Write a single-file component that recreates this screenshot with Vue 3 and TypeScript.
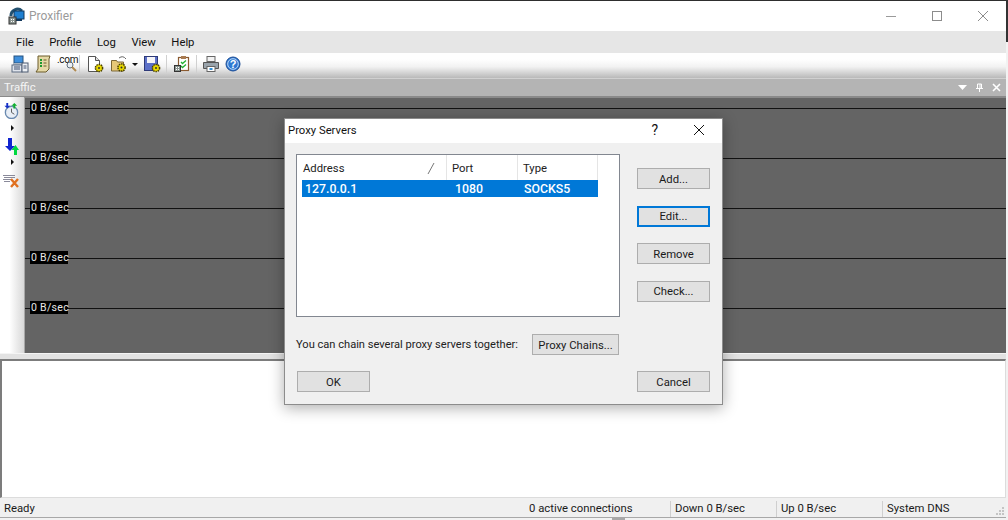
<script setup lang="ts">
const menus: string[] = ['File', 'Profile', 'Log', 'View', 'Help']
const rates: number[] = [0, 1, 2, 3, 4]
</script>

<template>
  <div class="screen">
    <div class="topedge"></div>
    <i class="desk"></i>
    <i class="deskbottom"></i>
    <div class="window">
      <div class="titlebar">
        <svg class="appicon" width="18" height="18" viewBox="0 0 18 18">
          <path d="M3 9a6.500 6.500 0 0 1 11-5" fill="none" stroke="#23506f" stroke-width="3" />
          <rect x="6" y="4" width="10" height="8" fill="#1f7fd0" stroke="#12385c" />
          <rect x="8" y="12" width="6" height="2" fill="#12385c" />
          <rect x="1" y="10" width="7" height="7" fill="#8a9490" stroke="#333" />
          <rect x="3" y="12" width="1" height="1" fill="#fff" /><rect x="5" y="12" width="1" height="1" fill="#fff" />
          <rect x="3" y="14" width="1" height="1" fill="#fff" /><rect x="5" y="14" width="1" height="1" fill="#fff" />
        </svg>
        <span class="apptitle">Proxifier</span>
        <div class="winctl">
          <svg width="12" height="12" viewBox="0 0 12 12"><path d="M1 6.500h10" stroke="#9a9a9a" /></svg>
          <svg width="12" height="12" viewBox="0 0 12 12"><rect x="1.500" y="1.500" width="9" height="9" fill="none" stroke="#8c8c8c" /></svg>
          <svg width="12" height="12" viewBox="0 0 12 12"><path d="M1 1l10 10M11 1L1 11" stroke="#8c8c8c" /></svg>
        </div>
      </div>

      <div class="menubar">
        <span v-for="m in menus" :key="m" class="menu">{{ m }}</span>
      </div>

      <div class="toolbar">
        <svg class="ti" width="18" height="18" viewBox="0 0 18 18">
          <rect x="3" y="1" width="9" height="7" fill="#3f8fdc" stroke="#27527f" />
          <rect x="2" y="8" width="10" height="2" fill="#aab4c2" />
          <rect x="1" y="10" width="10" height="7" fill="#dfe4ec" stroke="#5c6b80" />
          <rect x="11" y="8" width="6" height="9" fill="#eef1f5" stroke="#4c5a70" />
          <path d="M3 12h6M3 14h6M12.500 11h3M12.500 13h3" stroke="#405070" />
        </svg>
        <svg class="ti" width="18" height="18" viewBox="0 0 18 18">
          <path d="M4 1h12l-1 3v10l-3 3H2l2-3z" fill="#e5d9a6" stroke="#6a5a2a" />
          <path d="M6 5h2M6 8h2M6 11h2" stroke="#1c9a2f" stroke-width="2" />
          <path d="M9.500 5h3M9.500 8h3M9.500 11h3" stroke="#6a5a2a" />
        </svg>
        <span class="ti dotcom">
          <span class="dottext">.com</span>
          <svg class="lens" width="11" height="11" viewBox="0 0 11 11">
            <circle cx="4" cy="4" r="3" fill="#dfeaf4" fill-opacity="0.5" stroke="#5a6a7a" />
            <path d="M6 6l4 4" stroke="#b08a50" stroke-width="2" />
          </svg>
        </span>
        <i class="sep"></i>
        <svg class="ti doc" width="20" height="18" viewBox="0 0 20 18">
          <path d="M2.500 1.500h7l4 4v11h-11z" fill="#fff" stroke="#555" />
          <path d="M9.500 1.500v4h4" fill="#ddd" stroke="#555" />
          <circle cx="13" cy="13" r="3.600" fill="#e8d800" stroke="#4a4000" stroke-width="1.500" stroke-dasharray="1.500 0.800" />
          <circle cx="13" cy="13" r="1" fill="#333" />
        </svg>
        <svg class="ti" width="19" height="18" viewBox="0 0 19 18">
          <path d="M1.500 5.500h5l1 1.500h6v9h-12z" fill="#e6c878" stroke="#7a6636" />
          <path d="M9 3q4-3 7 1" fill="none" stroke="#666" />
          <circle cx="11.500" cy="12.500" r="3.600" fill="#e8d800" stroke="#4a4000" stroke-width="1.500" stroke-dasharray="1.500 0.800" />
          <circle cx="11.500" cy="12.500" r="1" fill="#333" />
        </svg>
        <i class="caret"></i>
        <svg class="ti save" width="20" height="18" viewBox="0 0 20 18">
          <rect x="1.500" y="1.500" width="13" height="14" fill="#5c70c8" stroke="#2e3a78" />
          <rect x="4" y="2" width="8" height="6" fill="#f4f4f8" />
          <circle cx="13" cy="13" r="3.600" fill="#e8d800" stroke="#4a4000" stroke-width="1.500" stroke-dasharray="1.500 0.800" />
          <circle cx="13" cy="13" r="1" fill="#333" />
        </svg>
        <i class="sep"></i>
        <svg class="ti" width="18" height="18" viewBox="0 0 18 18">
          <rect x="5.500" y="2.500" width="10" height="13" fill="#fff" stroke="#8a5a30" stroke-width="1.200" />
          <rect x="8" y="1" width="5" height="3" fill="#a87a50" />
          <path d="M8 7l1.500 1.500L13 5.500M8 11l1.500 1.500L13 9.500" fill="none" stroke="#22b030" stroke-width="1.300" />
          <rect x="1.500" y="10.500" width="6" height="6" fill="#8a9490" stroke="#333" />
          <rect x="3" y="12" width="1" height="1" fill="#fff" /><rect x="5" y="12" width="1" height="1" fill="#fff" />
          <rect x="3" y="14" width="1" height="1" fill="#fff" /><rect x="5" y="14" width="1" height="1" fill="#fff" />
        </svg>
        <i class="sep third"></i>
        <svg class="ti" width="18" height="18" viewBox="0 0 18 18">
          <rect x="5" y="1.500" width="8" height="5" fill="#f2f2f2" stroke="#666" />
          <path d="M1.500 7.500h15v6h-15z" fill="#9aa4ac" stroke="#555" />
          <rect x="5" y="11.500" width="8" height="5" fill="#fff" stroke="#666" />
          <rect x="7.500" y="13" width="3" height="2" fill="#2f8fd8" />
        </svg>
        <svg class="ti" width="16" height="16" viewBox="0 0 16 16">
          <circle cx="8" cy="8" r="7" fill="#2e78d2" stroke="#1c4c94" />
          <circle cx="8" cy="8" r="5.300" fill="none" stroke="#bcd8f6" />
          <text x="8" y="12" class="qmark" text-anchor="middle">?</text>
        </svg>
      </div>

      <div class="panelhead">
        <span class="paneltitle">Traffic</span>
        <div class="panelctl">
          <svg width="9" height="5" viewBox="0 0 9 5"><path d="M0 0h9L4.500 5z" fill="#fff" /></svg>
          <svg width="9" height="9" viewBox="0 0 9 9"><path d="M2.500 1h4v4.500h-4zM1 5.500h7M4.500 5.500V9M5 1v4" fill="none" stroke="#fff" /></svg>
          <svg width="9" height="9" viewBox="0 0 9 9"><path d="M1 1l7 7M8 1L1 8" stroke="#fff" stroke-width="1.600" /></svg>
        </div>
      </div>

      <div class="traffic">
        <div class="strip">
          <svg class="si" width="17" height="17" viewBox="0 0 18 18">
            <circle cx="9" cy="11" r="6.500" fill="#e8eef6" stroke="#6a8ab0" stroke-width="1.400" />
            <path d="M9 7v4l3 2" fill="none" stroke="#555" />
            <path d="M3.500 1v3H1.500l3 3 3-3H5.500V1z" fill="#1530c8" />
            <path d="M11 7V4H9l3-3 3 3h-2v3z" fill="#10b030" />
          </svg>
          <i class="tri"></i>
          <svg class="si gap" width="14" height="17" viewBox="0 0 14 17">
            <path d="M3 0h4v8h3L5 13 0 8h3z" fill="#1024d0" />
            <path d="M9 17v-5H6.500L10.500 7l3.500 5h-2v5z" fill="#00d840" />
          </svg>
          <i class="tri second"></i>
          <svg class="si gap2" width="17" height="14" viewBox="0 0 17 14">
            <path d="M0 1.500h12M1 3.500h11M0 5.500h8M1 7.500h6" stroke="#8a8a9a" />
            <path d="M8 5l7 8M15 5l-7 8" stroke="#e07020" stroke-width="2.400" />
          </svg>
        </div>
        <div class="graph">
          <div v-for="r in rates" :key="r" class="row">
            <i class="tick"></i>
            <span class="rate">0 B/sec</span>
            <i class="line"></i>
          </div>
        </div>
      </div>

      <div class="splitter"></div>
      <div class="logbox"></div>

      <div class="statusbar">
        <span class="st ready">Ready</span>
        <span class="st conn">0 active connections</span>
        <span class="st down">Down 0 B/sec</span>
        <span class="st up">Up 0 B/sec</span>
        <span class="st dns">System DNS</span>
        <svg class="grip" width="10" height="10" viewBox="0 0 10 10">
          <path d="M7 1h2v2H7zM4 4h2v2H4zM7 4h2v2H7zM1 7h2v2H1zM4 7h2v2H4zM7 7h2v2H7z" fill="#c4c4c4" />
        </svg>
      </div>
    </div>

    <div class="dialog">
      <div class="dtitle">
        <span>Proxy Servers</span>
        <span class="help">?</span>
        <svg class="dclose" width="12" height="12" viewBox="0 0 12 12"><path d="M1 1l10 10M11 1L1 11" stroke="#111" /></svg>
      </div>
      <div class="dbody">
        <div class="main">
          <div class="listbox">
            <div class="lhead">
              <span class="hc c1">Address<svg class="sort" width="8" height="13" viewBox="0 0 8 13"><path d="M1 12L7 1" stroke="#777" /></svg></span>
              <span class="hc c2">Port</span>
              <span class="hc c3">Type</span>
            </div>
            <div class="lrow">
              <span class="rc r1">127.0.0.1</span>
              <span class="rc r2">1080</span>
              <span class="rc r3">SOCKS5</span>
            </div>
          </div>
          <div class="side">
            <button class="btn">Add...</button>
            <button class="btn focus">Edit...</button>
            <button class="btn">Remove</button>
            <button class="btn">Check...</button>
          </div>
        </div>
        <div class="chain">
          <span class="chaintext">You can chain several proxy servers together:</span>
          <button class="btn chains">Proxy Chains...</button>
        </div>
        <div class="actions">
          <button class="btn">OK</button>
          <button class="btn">Cancel</button>
        </div>
      </div>
    </div>
  </div>
</template>

<style>
html, body { margin: 0; background: #fff; }
</style>

<style scoped>
.screen {
  position: relative;
  width: 1008px;
  height: 520px;
  overflow: hidden;
  background: #f2f2f2;
  font-family: Roboto, "Noto Sans", sans-serif;
  font-size: 11.300px;
  color: #1a1a1a;
}
.topedge { height: 1px; background: #2e2e2e; }
.desk {
  position: absolute;
  right: 0;
  top: 0;
  width: 2px;
  height: 42px;
  background: #333;
}
.deskbottom {
  position: absolute;
  left: 612px;
  bottom: 0;
  width: 13px;
  height: 2px;
  background: #a8a8a8;
}
.window {
  width: 1006px;
  display: flex;
  flex-direction: column;
}
.titlebar {
  height: 30px;
  flex: none;
  background: #fff;
  display: flex;
  align-items: center;
  padding-left: 8px;
  box-sizing: border-box;
}
.appicon { margin-right: 3px; margin-top: -1px; }
.apptitle { color: #9a9a9a; font-size: 12px; }
.winctl {
  margin-left: auto;
  display: flex;
  gap: 34px;
  padding-right: 17px;
  margin-top: -1px;
}
.menubar {
  height: 22px;
  flex: none;
  background: #e6e6e6;
  display: flex;
  align-items: center;
  padding-left: 16px;
  gap: 15.500px;
  color: #111;
}
.toolbar {
  height: 25px;
  flex: none;
  box-sizing: border-box;
  padding-bottom: 3px;
  background: linear-gradient(#fff 25%, #f2f2f2 55%, #b9b9b9);
  display: flex;
  align-items: center;
  padding-left: 11px;
}
.ti { flex: none; margin-right: 5px; }
.dotcom {
  position: relative;
  width: 18px;
  height: 18px;
  margin-right: 4px;
}
.dottext {
  position: absolute;
  left: 0;
  top: -1px;
  font-size: 10px;
  letter-spacing: -0.300px;
  color: #111;
}
.lens { position: absolute; left: 9px; top: 6px; }
.sep { width: 1px; height: 18px; background: #d0d0d0; margin: 0 6px 0 0; flex: none; }
.sep.third { margin-right: 5px; }
.doc { margin-right: 4px; }
.caret {
  width: 0;
  height: 0;
  border: 3px solid transparent;
  border-top: 3px solid #111;
  border-bottom: 0;
  margin: 0 5px 0 -2px;
  flex: none;
}
.save { margin-right: 3px; }
.panelhead {
  height: 19px;
  flex: none;
  background: #b4b4b4;
  border-top: 1px solid #d0d0d0;
  border-bottom: 1px solid #8a8a8a;
  box-sizing: border-box;
  display: flex;
  align-items: center;
  padding-left: 4px;
  color: #f4f4f4;
}
.panelctl {
  margin-left: auto;
  display: flex;
  align-items: center;
  gap: 8px;
  padding-right: 5px;
}
.traffic { height: 256px; flex: none; display: flex; }
.strip {
  width: 24px;
  background: linear-gradient(90deg, #fff 40%, #d8d8d8);
  display: flex;
  flex-direction: column;
  align-items: center;
  padding-top: 5px;
  box-sizing: border-box;
  flex: none;
}
.si { flex: none; margin-left: -1px; }
.gap { margin-top: 7px; }
.gap2 { margin-top: 9px; }
.tri {
  width: 0;
  height: 0;
  border: 3px solid transparent;
  border-left: 3px solid #111;
  border-right: 0;
  margin-top: 6px;
  flex: none;
}
.tri.second { margin-top: 4px; }
.graph {
  flex: 1;
  background: #646464;
  border-left: 1px solid #a8a8a8;
  border-top: 1px solid #8a8a8a;
  padding-top: 3px;
  box-sizing: border-box;
  overflow: hidden;
}
.row { height: 50px; display: flex; align-items: flex-start; }
.tick { width: 5px; height: 1px; background: #111; margin-top: 7px; flex: none; }
.rate {
  background: #000;
  color: #e8e8e8;
  height: 13px;
  line-height: 13px;
  width: 38px;
  padding-left: 1px;
  box-sizing: border-box;
  font-size: 10.500px;
  letter-spacing: 0.300px;
  white-space: nowrap;
  flex: none;
}
.line { flex: 1; height: 1px; background: #111; margin-top: 7px; }
.splitter { height: 6px; flex: none; background: #e2e2e2; border-top: 1px solid #f4f4f4; box-sizing: border-box; }
.logbox {
  height: 139px;
  flex: none;
  box-sizing: border-box;
  background: #fff;
  border: 1px solid #dcdcdc;
  border-top: 2px solid #7c7c7c;
  border-left: 2px solid #7c7c7c;
}
.statusbar {
  height: 20px;
  flex: none;
  background: #f0f0f0;
  display: flex;
  align-items: center;
  border-bottom: 1px solid #a8a8a8;
  box-sizing: border-box;
  padding-top: 2px;
  position: relative;
}
.st { height: 16px; line-height: 16px; box-sizing: border-box; white-space: nowrap; flex: none; }
.ready { width: 529px; padding-left: 4px; }
.conn { width: 141px; }
.down, .up { width: 106px; border-left: 1px solid #cfcfcf; padding-left: 4px; }
.dns { width: 106px; border-left: 1px solid #cfcfcf; padding-left: 4px; }
.grip { position: absolute; right: 1px; bottom: 1px; }
.dialog {
  position: absolute;
  left: 284px;
  top: 118px;
  width: 439px;
  height: 287px;
  box-sizing: border-box;
  border: 1px solid #8c8c8c;
  background: #f0f0f0;
  box-shadow: 0 3px 14px rgba(0, 0, 0, 0.32);
  display: flex;
  flex-direction: column;
}
.dtitle {
  height: 24px;
  flex: none;
  background: #fff;
  display: flex;
  align-items: center;
  padding-left: 3px;
  padding-bottom: 2px;
  box-sizing: border-box;
  color: #111;
  position: relative;
}
.help { margin-left: auto; margin-right: 35px; font-size: 14px; }
.dclose { margin-right: 17px; }
.dbody {
  flex: 1;
  display: flex;
  flex-direction: column;
  padding: 11px 12px 12px 11px;
  min-height: 0;
}
.main { display: flex; justify-content: space-between; height: 163px; flex: none; }
.listbox {
  width: 324px;
  height: 163px;
  box-sizing: border-box;
  background: #fff;
  border: 1px solid #828790;
}
.lhead { height: 25px; display: flex; background: #fff; }
.hc {
  height: 25px;
  line-height: 27px;
  box-sizing: border-box;
  border-right: 1px solid #e5e5e5;
  color: #222;
  padding-left: 6px;
  position: relative;
  flex: none;
}
.c1 { width: 150px; }
.c2 { width: 71px; padding-left: 5px; }
.c3 { width: 80px; padding-left: 5px; }
.sort { position: absolute; right: 11px; top: 7px; }
.lrow {
  margin: 0 21px 0 5px;
  height: 17px;
  background: #0078d7;
  color: #fff;
  display: flex;
  align-items: center;
  font-size: 12.300px;
  font-weight: 500;
}
.rc { flex: none; }
.r1 { width: 153px; padding-left: 3px; box-sizing: border-box; }
.r2 { width: 69px; }
.side {
  width: 73px;
  display: flex;
  flex-direction: column;
  padding-top: 14px;
  gap: 16.500px;
}
.btn {
  width: 73px;
  height: 21px;
  box-sizing: border-box;
  background: #e1e1e1;
  border: 1px solid #adadad;
  font-family: inherit;
  font-size: 11.300px;
  color: #1a1a1a;
  padding: 1px 0 0;
  flex: none;
}
.focus { border: 2px solid #0078d7; }
.chain {
  margin-top: 17px;
  display: flex;
  justify-content: space-between;
  align-items: center;
  height: 21px;
  width: 323px;
  color: #222;
  white-space: nowrap;
}
.chaintext { font-size: 11.100px; }
.chains { width: 87px; }
.actions {
  display: flex;
  justify-content: space-between;
  margin-top: 16px;
  padding-left: 1px;
}
.qmark { font: 700 11px "Liberation Sans", sans-serif; fill: #fff; }
</style>
